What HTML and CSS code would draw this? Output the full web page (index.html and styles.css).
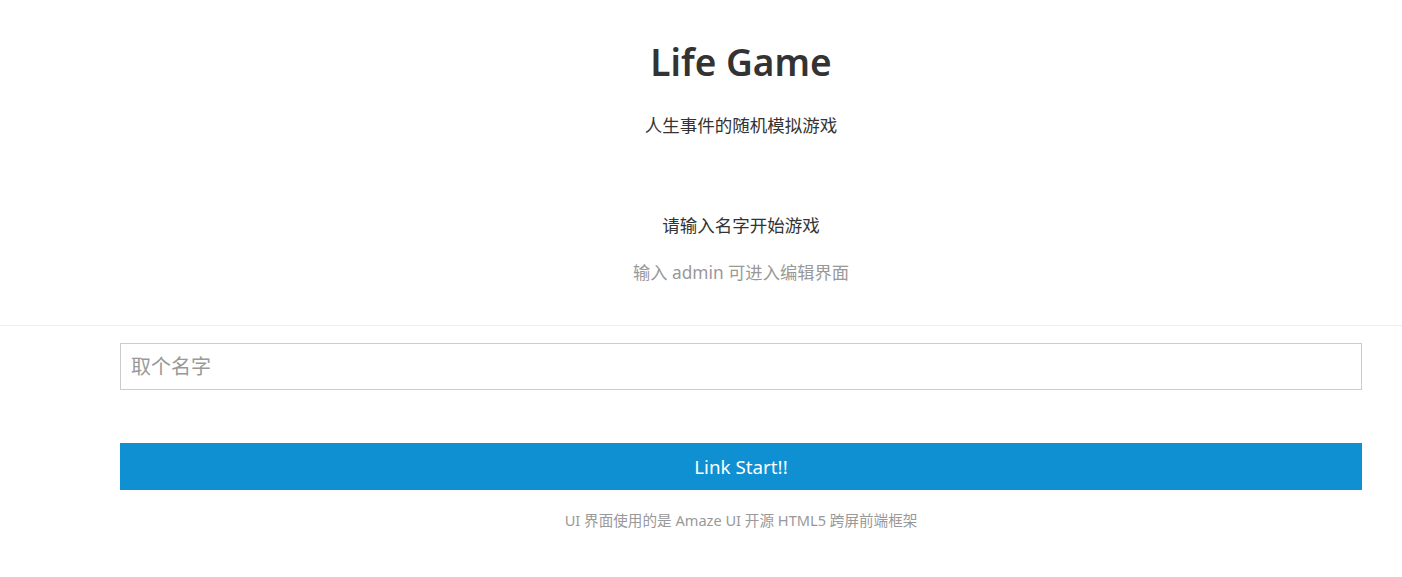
FILE: index.html
```html
<!DOCTYPE html>
<html lang="zh-CN">
<head>
<meta charset="utf-8">
<title>Life Game</title>
<link rel="stylesheet" href="styles.css">
</head>
<body>
<header class="hero">
  <div class="col">
    <h1 class="title">Life Game</h1>
    <p class="subtitle">人生事件的随机模拟游戏</p>
    <p class="prompt">请输入名字开始游戏</p>
    <p class="hint">输入 admin 可进入编辑界面</p>
  </div>
</header>
<hr class="divider">
<main class="col">
  <form class="form">
    <input class="name-input" type="text" placeholder="取个名字">
    <button class="btn" type="button">Link Start!!</button>
  </form>
  <p class="footer">UI 界面使用的是 Amaze UI 开源 HTML5 跨屏前端框架</p>
</main>
</body>
</html>
```
FILE: styles.css
```css
* { box-sizing: border-box; }
html, body {
  margin: 0;
  padding: 0;
  background: #fff;
}
body {
  font-family: "Noto Sans", "Noto Sans CJK SC", sans-serif;
  color: #333;
  font-size: 16px;
}
.col {
  margin-left: 120px;
  margin-right: 40px;
}
.hero {
  text-align: center;
  padding-top: 38px;
  padding-bottom: 40px;
}
.title {
  font-size: 37px;
  font-weight: 600;
  line-height: 48px;
  margin: 0;
  color: #333;
}
.subtitle {
  margin: 27px 0 0;
  line-height: 24px;
  font-size: 17.5px;
}
.prompt {
  margin: 76px 0 0;
  line-height: 24px;
  font-size: 17.5px;
}
.hint {
  margin: 24px 0 0;
  line-height: 24px;
  font-size: 17.3px;
  color: #999;
}
.divider {
  border: 0;
  border-top: 1px solid #eee;
  margin: 0;
}
.form {
  padding-top: 17px;
  display: flex;
  flex-direction: column;
  gap: 53px;
}
.name-input {
  display: block;
  width: 100%;
  height: 47px;
  border: 1px solid #ccc;
  padding: 0 10px;
  font-family: "Noto Sans", "Noto Sans CJK SC", sans-serif;
  font-size: 20px;
  color: #555;
  outline: none;
  border-radius: 0;
}
.name-input::placeholder { color: #999; }
.btn {
  display: block;
  width: 100%;
  height: 47px;
  border: 0;
  background: #0e90d2;
  color: #fff;
  font-family: "Noto Sans", "Noto Sans CJK SC", sans-serif;
  font-size: 18.8px;
  cursor: pointer;
}
.footer {
  text-align: center;
  margin: 19px 0 0;
  font-size: 14.6px;
  line-height: 22px;
  color: #999;
}
```
